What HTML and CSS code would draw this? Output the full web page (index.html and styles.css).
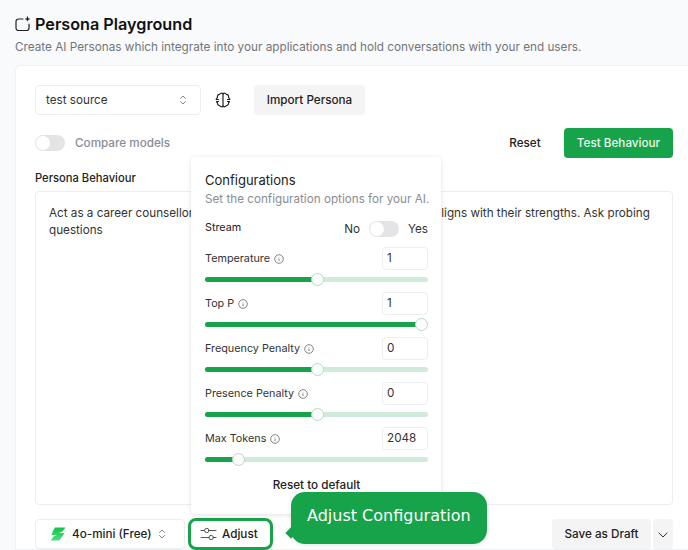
FILE: index.html
```html
<!DOCTYPE html>
<html lang="en">
<head>
	<meta charset="UTF-8">
	<title>Persona Playground</title>
	<link rel="stylesheet" href="styles.css">
</head>
<body>

<div class="page">
	<h1 class="title">
		<svg class="title-icon" width="16" height="16" viewBox="0 0 16 16" fill="none" stroke="#222" stroke-width="1.2" stroke-linecap="round" stroke-linejoin="round"><path d="M8 3H3.500A2.500 2.500 0 0 0 1 5.500V12a2.500 2.500 0 0 0 2.500 2.500h8A2.500 2.500 0 0 0 14 12V8"/><path d="M12.500 .8l.6 1.600 1.600.6-1.600.6-.6 1.600-.6-1.600-1.600-.6 1.600-.6z" fill="#222" stroke-width=".6"/></svg>
		Persona Playground
	</h1>
	<p class="subtitle">Create AI Personas which integrate into your applications and hold conversations with your end users.</p>

	<div class="card">
		<div class="row source-row">
			<div class="select source-select">
				<span>test source</span>
				<svg width="8" height="12" viewBox="0 0 8 12" fill="none" stroke="#888" stroke-width="1" stroke-linecap="round" stroke-linejoin="round"><path d="M1.500 4.500L4 2l2.500 2.500M1.500 7.500L4 10l2.500-2.500"/></svg>
			</div>
			<svg class="brain" width="16" height="16" viewBox="0 0 16 16" fill="none" stroke="#222" stroke-width="1.200" stroke-linecap="round" stroke-linejoin="round"><path d="M8 1.800V14.200"/><path d="M8 1.800C7 .9 5.200 1 4.500 2.400 3 2.500 2 3.900 2.500 5.400 1.700 5.900 1.200 6.800 1.200 7.500H3.500M3.500 9.500H1.500C1.500 10 1.900 10.500 2.500 10.800 2.200 12.200 3.200 13.500 4.500 13.600 5.200 15 7 15.100 8 14.200"/><path d="M8 1.800C9 .9 10.800 1 11.500 2.400 13 2.500 14 3.900 13.500 5.400 14.300 5.900 14.800 6.800 14.800 7.500H12.500M12.500 9.500H14.500C14.500 10 14.100 10.500 13.500 10.800 13.800 12.200 12.800 13.500 11.500 13.600 10.800 15 9 15.100 8 14.200"/></svg>
			<button class="btn btn-grey import-btn">Import Persona</button>
		</div>

		<div class="row compare-row">
			<div class="toggle"><span class="knob"></span></div>
			<span class="compare-label">Compare models</span>
			<span class="spacer"></span>
			<button class="btn btn-plain">Reset</button>
			<button class="btn btn-green">Test Behaviour</button>
		</div>

		<div class="behaviour-label">Persona Behaviour</div>
		<div class="behaviour-box">Act as a career counsellor who helps students pick a career path that aligns with their strengths. Ask probing questions</div>

		<div class="row bottom-row">
			<div class="select model-select">
				<svg width="16" height="14" viewBox="0 0 16 14"><defs><linearGradient id="bolt" x1="0" y1="0" x2="0" y2="1"><stop offset="0" stop-color="#16c24a"/><stop offset="1" stop-color="#4ade80"/></linearGradient></defs><path d="M5 .5H15.500L12.500 4.500 9 6H14.500L11.500 10.500 9 13.500H.8L3.500 9.500 7 8H1.500L3 4z" fill="url(#bolt)"/></svg>
				<span>4o-mini (Free)</span>
				<svg width="8" height="12" viewBox="0 0 8 12" fill="none" stroke="#888" stroke-width="1" stroke-linecap="round" stroke-linejoin="round"><path d="M1.500 4.500L4 2l2.500 2.500M1.500 7.500L4 10l2.500-2.500"/></svg>
			</div>
			<div class="adjust">
				<svg width="17" height="14" viewBox="0 0 17 14" fill="none" stroke="#555" stroke-width="1" stroke-linecap="round"><path d="M1 3.500h3.500M9 3.500h7M1 10.500h8M13.500 10.500H16"/><circle cx="6.800" cy="3.500" r="2.200"/><circle cx="11.200" cy="10.500" r="2.200"/></svg>
				<span>Adjust</span>
			</div>
			<span class="spacer"></span>
			<button class="btn btn-grey draft-btn">Save as Draft</button>
			<button class="btn btn-grey chevron-btn">
				<svg width="10" height="6" viewBox="0 0 10 6" fill="none" stroke="#333" stroke-width="1" stroke-linecap="round" stroke-linejoin="round"><path d="M1 1l4 4 4-4"/></svg>
			</button>
		</div>
	</div>
</div>

<div class="popover">
	<div class="pop-title">Configurations</div>
	<div class="pop-sub">Set the configuration options for your AI.</div>

	<div class="stream-row">
		<span class="stream-label">Stream</span>
		<span class="spacer"></span>
		<span class="stream-opt">No</span>
		<div class="toggle"><span class="knob"></span></div>
		<span class="stream-opt">Yes</span>
	</div>

	<div class="param">
		<div class="param-head">
			<span>Temperature</span>
			<svg class="info" width="10" height="10" viewBox="0 0 10 10" fill="none" stroke="#666" stroke-width=".8"><circle cx="5" cy="5" r="4.300"/><path d="M5 4.500v2.500M5 3v.4"/></svg>
			<span class="spacer"></span>
			<div class="num">1</div>
		</div>
		<div class="slider"><div class="fill" style="width: 50%"></div><span class="thumb" style="left: 50%"></span></div>
	</div>

	<div class="param">
		<div class="param-head">
			<span>Top P</span>
			<svg class="info" width="10" height="10" viewBox="0 0 10 10" fill="none" stroke="#666" stroke-width=".8"><circle cx="5" cy="5" r="4.300"/><path d="M5 4.500v2.500M5 3v.4"/></svg>
			<span class="spacer"></span>
			<div class="num">1</div>
		</div>
		<div class="slider"><div class="fill" style="width: 97%"></div><span class="thumb" style="left: 97%"></span></div>
	</div>

	<div class="param">
		<div class="param-head">
			<span>Frequency Penalty</span>
			<svg class="info" width="10" height="10" viewBox="0 0 10 10" fill="none" stroke="#666" stroke-width=".8"><circle cx="5" cy="5" r="4.300"/><path d="M5 4.500v2.500M5 3v.4"/></svg>
			<span class="spacer"></span>
			<div class="num">0</div>
		</div>
		<div class="slider"><div class="fill" style="width: 50%"></div><span class="thumb" style="left: 50%"></span></div>
	</div>

	<div class="param">
		<div class="param-head">
			<span>Presence Penalty</span>
			<svg class="info" width="10" height="10" viewBox="0 0 10 10" fill="none" stroke="#666" stroke-width=".8"><circle cx="5" cy="5" r="4.300"/><path d="M5 4.500v2.500M5 3v.4"/></svg>
			<span class="spacer"></span>
			<div class="num">0</div>
		</div>
		<div class="slider"><div class="fill" style="width: 50%"></div><span class="thumb" style="left: 50%"></span></div>
	</div>

	<div class="param">
		<div class="param-head">
			<span>Max Tokens</span>
			<svg class="info" width="10" height="10" viewBox="0 0 10 10" fill="none" stroke="#666" stroke-width=".8"><circle cx="5" cy="5" r="4.300"/><path d="M5 4.500v2.500M5 3v.4"/></svg>
			<span class="spacer"></span>
			<div class="num">2048</div>
		</div>
		<div class="slider"><div class="fill" style="width: 15%"></div><span class="thumb" style="left: 15%"></span></div>
	</div>

	<div class="pop-reset">Reset to default</div>
</div>

<div class="tip">
	<span class="tip-arrow"></span>
	Adjust Configuration
</div>

</body>
</html>
```

FILE: styles.css
```css
html, body {
	margin: 0;
	height: 100%;
	overflow: hidden;
}

body {
	position: relative;
	background-color: #f9fafb;
	font-family: Inter, "Liberation Sans", sans-serif;
	font-size: 11.700px;
	color: #222;
}

.spacer {
	flex: 1;
}

.row {
	display: flex;
	align-items: center;
}

.page {
	padding: 15px 0 0 15px;
}

.title {
	display: flex;
	align-items: center;
	gap: 4px;
	margin: 0;
	height: 18px;
	font-size: 16.200px;
	font-weight: 600;
	line-height: 18px;
	color: #111;
}

.subtitle {
	margin: 6px 0 0;
	font-size: 11.750px;
	line-height: 16px;
	color: #71757c;
}

.card {
	margin: 10px 0 0;
	padding: 19px 15px 0 19px;
	height: 485px;
	box-sizing: border-box;
	background-color: #fff;
	border: 1px solid #f0f1f3;
	border-right: 0;
	border-radius: 6px 0 0 0;
}

.select {
	display: flex;
	align-items: center;
	box-sizing: border-box;
	height: 30px;
	background-color: #fff;
	border: 1px solid #eceef0;
	border-radius: 4px;
}

.source-select {
	justify-content: space-between;
	width: 166px;
	padding: 0 13px 0 10px;
	color: #333;
}

.brain {
	margin: 0 23px 0 14px;
}

.btn {
	height: 30px;
	padding: 0;
	border: 0;
	border-radius: 4px;
	font-family: inherit;
	font-size: 11.700px;
	font-weight: 450;
	color: #222;
}

.btn-grey {
	background-color: #f4f4f5;
}

.btn-plain {
	background: none;
	width: 32px;
	margin-right: 23px;
}

.btn-green {
	width: 109px;
	background-color: #16a34a;
	color: #eaf7ef;
}

.import-btn {
	width: 111px;
}

.compare-row {
	margin-top: 13px;
}

.toggle {
	position: relative;
	width: 30px;
	height: 16px;
	border-radius: 8px;
	background-color: #e4e4e7;
}

.knob {
	position: absolute;
	top: 1px;
	left: 1px;
	width: 14px;
	height: 14px;
	border-radius: 50%;
	background-color: #fff;
}

.compare-label {
	margin-left: 10px;
	font-weight: 450;
	color: #8a8d93;
}

.behaviour-label {
	margin-top: 12px;
	height: 21px;
	line-height: 16px;
	font-weight: 500;
	font-size: 11.200px;
	color: #222;
}

.behaviour-box {
	box-sizing: border-box;
	height: 314px;
	padding: 13px 13px;
	background-color: #fff;
	border: 1px solid #eceef0;
	border-radius: 4px;
	line-height: 17px;
	color: #333;
}

.bottom-row {
	margin-top: 13px;
}

.model-select {
	width: 150px;
	padding: 0 0 0 14px;
	gap: 6px;
	font-weight: 450;
	box-sizing: border-box;
}

.adjust {
	display: flex;
	align-items: center;
	gap: 5px;
	box-sizing: border-box;
	width: 85px;
	height: 32px;
	margin-left: 3px;
	padding-left: 9px;
	border: 3px solid #16a34a;
	border-radius: 8px;
	background-color: #fff;
	font-weight: 450;
}

.draft-btn {
	width: 99px;
}

.chevron-btn {
	width: 20px;
	margin-left: 2px;
}

.popover {
	position: absolute;
	top: 157px;
	left: 191px;
	box-sizing: border-box;
	width: 250px;
	height: 357px;
	padding: 15px 13px 0 14px;
	background-color: #fff;
	border-radius: 4px;
	box-shadow: 0 1px 5px rgba(0, 0, 0, .12);
	font-size: 10.800px;
}

.pop-title {
	font-size: 13px;
	line-height: 16px;
	color: #222;
}

.pop-sub {
	margin-top: 3px;
	font-size: 11.700px;
	line-height: 16px;
	white-space: nowrap;
	color: #8a8d93;
}

.stream-row {
	display: flex;
	align-items: center;
	gap: 9px;
	margin-top: 13px;
	height: 18px;
}

.stream-label {
	position: relative;
	top: -2px;
}

.stream-opt {
	font-size: 11.700px;
	color: #333;
}

.param {
	height: 45px;
}

.param-head {
	display: flex;
	align-items: center;
	gap: 4px;
	height: 23px;
	color: #333;
}

.stream-row + .param {
	margin-top: 9px;
}

.num {
	box-sizing: border-box;
	width: 46px;
	height: 23px;
	padding-left: 4px;
	border: 1px solid #eceef0;
	border-radius: 4px;
	font-size: 11.700px;
	line-height: 21px;
}

.slider {
	position: relative;
	height: 5px;
	margin-top: 7px;
	border-radius: 3px;
	background-color: #d0ebdb;
}

.fill {
	height: 100%;
	border-radius: 3px;
	background-color: #16a34a;
}

.thumb {
	position: absolute;
	top: -4px;
	box-sizing: border-box;
	width: 13px;
	height: 13px;
	margin-left: -6px;
	border: 1px solid #b5dcc4;
	border-radius: 50%;
	background-color: #fbfdfc;
}

.pop-reset {
	margin-top: 5px;
	line-height: 16px;
	text-align: center;
	font-size: 11.700px;
	font-weight: 450;
	color: #222;
}

.tip {
	position: absolute;
	top: 492px;
	left: 291px;
	box-sizing: border-box;
	width: 196px;
	height: 52px;
	padding: 0 16px;
	border-radius: 14px;
	background-color: #16a34a;
	box-shadow: 0 1px 5px rgba(0, 0, 0, .1);
	font-family: "DejaVu Sans", sans-serif;
	font-size: 16px;
	line-height: 47px;
	white-space: nowrap;
	color: #fff;
}

.tip-arrow {
	position: absolute;
	top: 37px;
	left: -4px;
	width: 8px;
	height: 8px;
	background-color: #16a34a;
	transform: rotate(45deg);
}
```
